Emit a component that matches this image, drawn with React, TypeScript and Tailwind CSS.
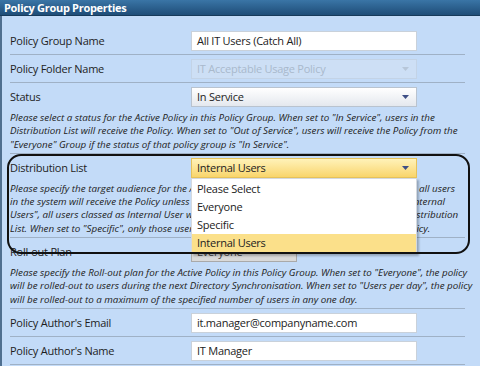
import React from "react";

const font = { fontFamily: '"Open Sans", "Noto Sans", sans-serif' };

function Arrow({ color = "#3e4f86" }: { color?: string }) {
  return (
    <svg width="7" height="4" viewBox="0 0 7 4" className="shrink-0">
      <path d="M0 0 L7 0 L3.5 4 Z" fill={color} />
    </svg>
  );
}

function TextBox({ value }: { value: string }) {
  return (
    <div className="flex h-[20px] w-[226px] items-center border border-[#c9d1da] bg-white px-[5px] text-[11px] tracking-[-0.25px] text-[#222]">
      {value}
    </div>
  );
}

function Select({
  value,
  tone = "normal",
}: {
  value: string;
  tone?: "normal" | "disabled" | "active";
}) {
  const toneClass =
    tone === "disabled"
      ? "border-[#c3d3e6] bg-[#cddff5] text-[#a9b9cc]"
      : tone === "active"
        ? "border-[#e6c25a] bg-gradient-to-b from-[#fff2b8] to-[#f9d56a] text-[#222]"
        : "border-[#b9c3cf] bg-gradient-to-b from-white to-[#e4e8ee] text-[#222]";
  return (
    <div
      className={`flex h-[20px] w-[226px] items-center justify-between border px-[5px] text-[11px] tracking-[-0.25px] ${toneClass}`}
    >
      <span>{value}</span>
      <span className="pr-[2px]">
        <Arrow color={tone === "disabled" ? "#b7c6d8" : "#3e4f86"} />
      </span>
    </div>
  );
}

function Label({ children }: { children: React.ReactNode }) {
  return <div className="w-[181px] text-[11px] tracking-[-0.25px] text-[#1e1e1e]">{children}</div>;
}

function Row({ label, children }: { label: string; children: React.ReactNode }) {
  return (
    <div className="flex items-center border-b border-[#9fb1c6] pb-[3px] pt-[4px]">
      <Label>{label}</Label>
      {children}
    </div>
  );
}

function Desc({ lines }: { lines: string[] }) {
  return (
    <div className="whitespace-nowrap text-[9.8px] italic leading-[13.3px] text-[#222]">
      {lines.map((l) => (
        <div key={l}>{l}</div>
      ))}
    </div>
  );
}

export default function App() {
  return (
    <div className="h-[366px] w-[480px] overflow-hidden bg-[#c3dbf8]" style={font}>
      {/* title bar */}
      <div className="flex h-[16px] items-center border-b border-[#173a5a] bg-gradient-to-b from-[#3a75a6] to-[#1f4d78] pl-[4px] text-[11px] font-bold leading-none tracking-[-0.3px] text-white">
        Policy Group Properties
      </div>

      <div className="h-[350px] border-l-2 border-[#4f6f90] pl-[8px] pr-[15px] pt-[11px]">
        <Row label="Policy Group Name">
          <TextBox value="All IT Users (Catch All)" />
        </Row>
        <Row label="Policy Folder Name">
          <Select value="IT Acceptable Usage Policy" tone="disabled" />
        </Row>

        {/* Status */}
        <div className="border-b border-[#9fb1c6] pb-[2px] pt-[4px]">
          <div className="flex items-center">
            <Label>Status</Label>
            <Select value="In Service" />
          </div>
          <div className="mt-[4px]">
            <Desc
              lines={[
                'Please select a status for the Active Policy in this Policy Group. When set to "In Service", users in the',
                'Distribution List will receive the Policy. When set to "Out of Service", users will receive the Policy from the',
                '"Everyone" Group if the status of that policy group is "In Service".',
              ]}
            />
          </div>
        </div>

        {/* Distribution list with dropdown open */}
        <div className="relative border-b border-[#9fb1c6] pb-[2px] pt-[4px]">
          <div className="flex items-center">
            <Label>Distribution List</Label>
            <Select value="Internal Users" tone="active" />
          </div>
          <div className="mt-[4px]">
            <Desc
              lines={[
                'Please specify the target audience for the Active Policy in this Policy Group. If set to "Everyone", all users',
                'in the system will receive the Policy unless they have been flagged as "External". When set to "Internal',
                'Users", all users classed as Internal User will receive the Policy, provided that they are in the Distribution',
                'List. When set to "Specific", only those users selected in the Distribution List, will receive the Policy.',
              ]}
            />
          </div>

          {/* dropdown list */}
          <div className="absolute left-[181px] top-[24px] z-20 w-[226px] border border-[#d4d9df] bg-white py-[1px] text-[11px] tracking-[-0.25px] text-[#222] shadow-[2px_2px_2px_rgba(0,0,0,0.25)]">
            <div className="flex h-[18px] items-center px-[5px]">Please Select</div>
            <div className="flex h-[18px] items-center px-[5px]">Everyone</div>
            <div className="flex h-[18px] items-center px-[5px]">Specific</div>
            <div className="flex h-[18px] items-center bg-[#fbe08a] px-[5px]">Internal Users</div>
          </div>

          {/* hand-drawn highlight */}
          <div className="pointer-events-none absolute -left-[3px] -right-[5px] top-0 z-30 h-[100px] rounded-[14px] border-2 border-[#111]" />
        </div>

        {/* Roll-out plan */}
        <div className="border-b border-[#9fb1c6] pb-[2px] pt-[4px]">
          <div className="flex items-center">
            <Label>Roll-out Plan</Label>
            <div className="flex h-[20px] w-[106px] items-center justify-between border border-[#a9a9a9] bg-[#d9d9d9] px-[5px] text-[11px] tracking-[-0.25px] text-[#444]">
              <span>Everyone</span>
              <Arrow color="#555" />
            </div>
          </div>
          <div className="mt-[4px]">
            <Desc
              lines={[
                'Please specify the Roll-out plan for the Active Policy in this Policy Group. When set to "Everyone", the policy',
                'will be rolled-out to users during the next Directory Synchronisation. When set to "Users per day", the policy',
                "will be rolled-out to a maximum of the specified number of users in any one day.",
              ]}
            />
          </div>
        </div>

        <Row label="Policy Author's Email">
          <TextBox value="it.manager@companyname.com" />
        </Row>
        <Row label="Policy Author's Name">
          <TextBox value="IT Manager" />
        </Row>
      </div>
    </div>
  );
}
